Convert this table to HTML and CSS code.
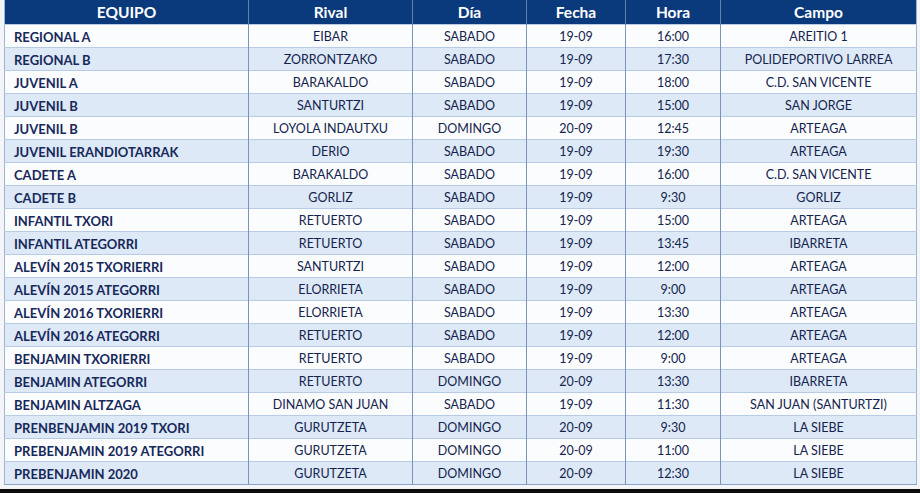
FILE: index.html
```html
<!DOCTYPE html>
<html lang="es">
<head>
<meta charset="utf-8">
<title>Calendario</title>
<link rel="stylesheet" href="styles.css">
</head>
<body>
<div class="page">
<table class="sched">
<colgroup>
<col class="c-team"><col class="c-rival"><col class="c-dia"><col class="c-fecha"><col class="c-hora"><col class="c-campo">
</colgroup>
<thead>
<tr><th>EQUIPO</th><th>Rival</th><th>Día</th><th>Fecha</th><th>Hora</th><th>Campo</th></tr>
</thead>
<tbody>
<tr><td>REGIONAL A</td><td>EIBAR</td><td>SABADO</td><td>19-09</td><td>16:00</td><td>AREITIO 1</td></tr>
<tr><td>REGIONAL B</td><td>ZORRONTZAKO</td><td>SABADO</td><td>19-09</td><td>17:30</td><td>POLIDEPORTIVO LARREA</td></tr>
<tr><td>JUVENIL A</td><td>BARAKALDO</td><td>SABADO</td><td>19-09</td><td>18:00</td><td>C.D. SAN VICENTE</td></tr>
<tr><td>JUVENIL B</td><td>SANTURTZI</td><td>SABADO</td><td>19-09</td><td>15:00</td><td>SAN JORGE</td></tr>
<tr><td>JUVENIL B</td><td>LOYOLA INDAUTXU</td><td>DOMINGO</td><td>20-09</td><td>12:45</td><td>ARTEAGA</td></tr>
<tr><td>JUVENIL ERANDIOTARRAK</td><td>DERIO</td><td>SABADO</td><td>19-09</td><td>19:30</td><td>ARTEAGA</td></tr>
<tr><td>CADETE A</td><td>BARAKALDO</td><td>SABADO</td><td>19-09</td><td>16:00</td><td>C.D. SAN VICENTE</td></tr>
<tr><td>CADETE B</td><td>GORLIZ</td><td>SABADO</td><td>19-09</td><td>9:30</td><td>GORLIZ</td></tr>
<tr><td>INFANTIL TXORI</td><td>RETUERTO</td><td>SABADO</td><td>19-09</td><td>15:00</td><td>ARTEAGA</td></tr>
<tr><td>INFANTIL ATEGORRI</td><td>RETUERTO</td><td>SABADO</td><td>19-09</td><td>13:45</td><td>IBARRETA</td></tr>
<tr><td>ALEVÍN 2015 TXORIERRI</td><td>SANTURTZI</td><td>SABADO</td><td>19-09</td><td>12:00</td><td>ARTEAGA</td></tr>
<tr><td>ALEVÍN 2015 ATEGORRI</td><td>ELORRIETA</td><td>SABADO</td><td>19-09</td><td>9:00</td><td>ARTEAGA</td></tr>
<tr><td>ALEVÍN 2016 TXORIERRI</td><td>ELORRIETA</td><td>SABADO</td><td>19-09</td><td>13:30</td><td>ARTEAGA</td></tr>
<tr><td>ALEVÍN 2016 ATEGORRI</td><td>RETUERTO</td><td>SABADO</td><td>19-09</td><td>12:00</td><td>ARTEAGA</td></tr>
<tr><td>BENJAMIN TXORIERRI</td><td>RETUERTO</td><td>SABADO</td><td>19-09</td><td>9:00</td><td>ARTEAGA</td></tr>
<tr><td>BENJAMIN ATEGORRI</td><td>RETUERTO</td><td>DOMINGO</td><td>20-09</td><td>13:30</td><td>IBARRETA</td></tr>
<tr><td>BENJAMIN ALTZAGA</td><td>DINAMO SAN JUAN</td><td>SABADO</td><td>19-09</td><td>11:30</td><td>SAN JUAN (SANTURTZI)</td></tr>
<tr><td>PRENBENJAMIN 2019 TXORI</td><td>GURUTZETA</td><td>DOMINGO</td><td>20-09</td><td>9:30</td><td>LA SIEBE</td></tr>
<tr><td>PREBENJAMIN 2019 ATEGORRI</td><td>GURUTZETA</td><td>DOMINGO</td><td>20-09</td><td>11:00</td><td>LA SIEBE</td></tr>
<tr><td>PREBENJAMIN 2020</td><td>GURUTZETA</td><td>DOMINGO</td><td>20-09</td><td>12:30</td><td>LA SIEBE</td></tr>
</tbody>
</table>
<div class="bottom-bar"></div>
</div>
</body>
</html>
```

FILE: styles.css
```css
html, body {
  margin: 0;
  padding: 0;
  background: #f3f5f8;
}
.page {
  width: 920px;
  height: 493px;
  display: flex;
  flex-direction: column;
  overflow: hidden;
}
.sched {
  margin: 0 4px;
  width: 912px;
  border-collapse: collapse;
  table-layout: fixed;
  font-family: Lato, "Open Sans", sans-serif;
  font-size: 12.5px;
  color: #14234d;
  border-right: 1px solid #9fb3cf;
  border-left: 1px solid #9fb3cf;
  border-bottom: 1px solid #8ea4c4;
}
.c-team { width: 244px; }
.c-rival { width: 164px; }
.c-dia { width: 114px; }
.c-fecha { width: 99px; }
.c-hora { width: 95px; }
.c-campo { width: 196px; }
.sched th {
  background: #0b3a7c;
  color: #ffffff;
  font-weight: 700;
  font-size: 15.5px;
  height: 24px;
  padding: 0;
  text-align: center;
  border-left: 1px solid #5f80b0;
}
.sched th:first-child { border-left: none; }
.sched td {
  height: 21px;
  padding: 1px 0 0 0;
  text-align: center;
  border-top: 1px solid #b8cbe4;
  border-left: 1px solid #7d93b6;
  white-space: nowrap;
}
.sched td:first-child {
  text-align: left;
  padding-left: 9px;
  font-weight: 700;
  font-size: 13px;
  color: #17285a;
  border-left: none;
}
.sched tbody tr:nth-child(odd) { background: #fbfcfe; }
.sched tbody tr:nth-child(even) { background: #dde9f6; }
.bottom-bar {
  margin-top: auto;
  height: 4px;
  background: #0c0c0c;
}
```
